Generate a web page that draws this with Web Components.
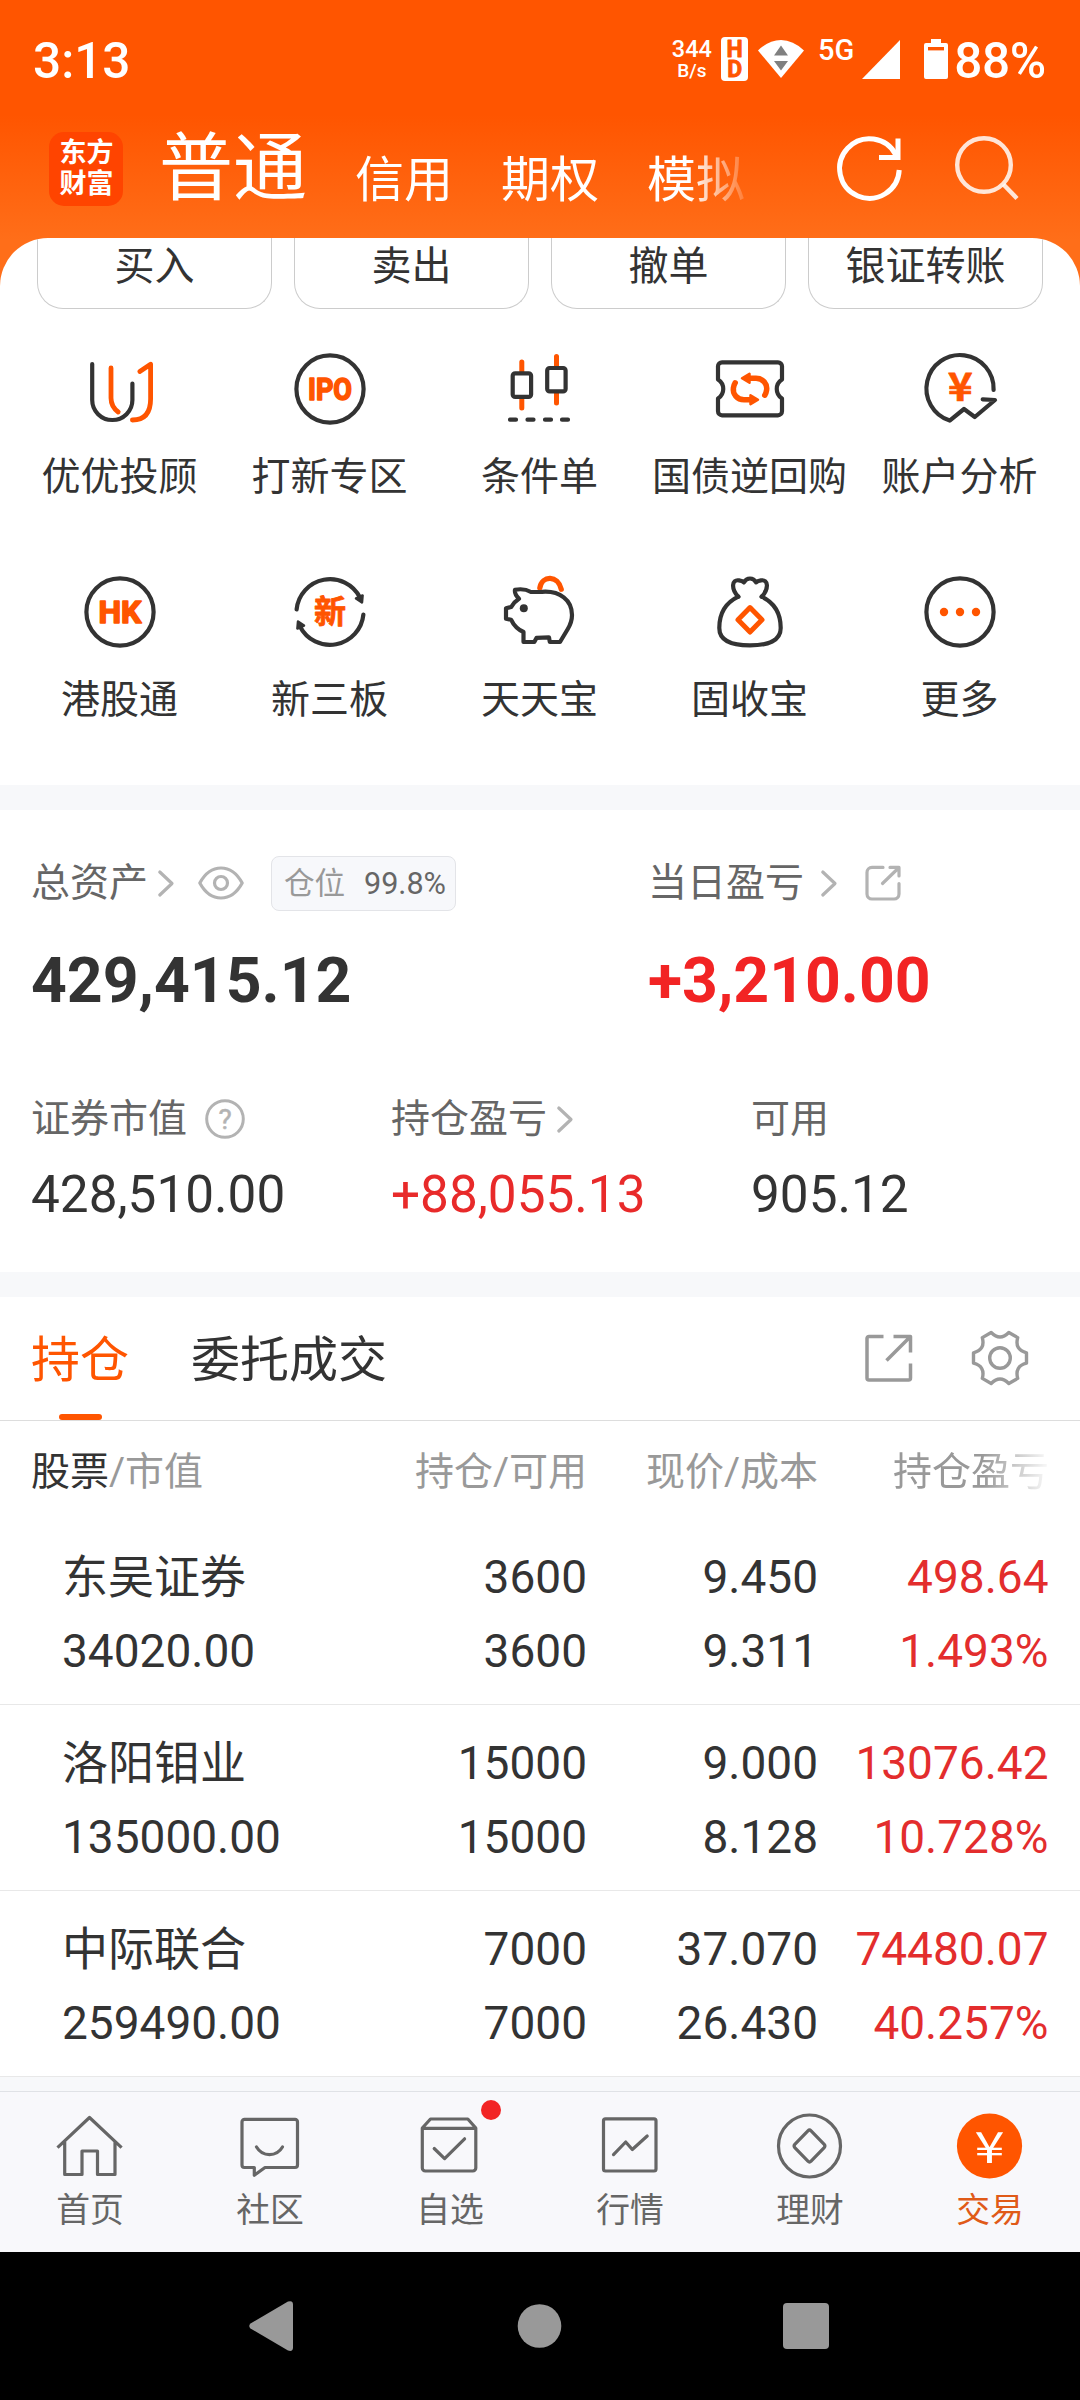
<!DOCTYPE html>
<html lang="zh-CN">
<head>
<meta charset="UTF-8">
<title>交易</title>
<style>
    body {
        margin: 0;
        width: 1080px;
        font-family: Roboto, "Noto Sans CJK SC", sans-serif;
        color: #333;
        background: #fff;
    }
</style>
</head>
<body>
<trade-page></trade-page>

<script>
const DARK = '#333';
const ORANGE = '#ff5500';

// outline of the settings gear: six flat teeth joined by concave curves
function gearPath(c, r, dip) {
    const at = (deg, rad) => {
        const a = deg * Math.PI / 180;
        return `${(c + rad * Math.cos(a)).toFixed(1)} ${(c + rad * Math.sin(a)).toFixed(1)}`;
    };
    let d = '';
    for (let i = 0; i < 6; i++) {
        const t = i * 60;
        d += `${i ? 'L' : 'M'}${at(t - 11, r)}L${at(t + 11, r)}Q${at(t + 30, dip)} ${at(t + 49, r)}`;
    }
    return d + 'Z';
}

const swapArrow = `
    <path d="M39 29.3H46C53 29.3 57.5 35 56.6 41Q56.2 44 54.8 46.2" stroke="${ORANGE}" stroke-width="5.5"/>
    <path d="M32 29.3L39.5 24.8V33.8Z" fill="${ORANGE}" stroke="${ORANGE}" stroke-width="2.5"/>`;

const ringArrow = `
    <path d="M6.6 37.5A33.6 33.6 0 0 1 70 25.5"/>
    <path d="M66 26.5L72.6 23.5L72 30.5Z" fill="${DARK}" stroke-width="2.5"/>`;

// name: [width, height, stroke colour, stroke width, markup]
const ICONS = {
    'hd': [27, 44, 'none', 0, `
        <rect width="27" height="44" rx="4" fill="#fff"/>
        <text x="13.5 13.8" y="20.3 40" font-size="23" style="stroke-width:.8">HD</text>`],
    'wifi': [48, 40, 'none', 0, `
        <path d="M1 11.5Q12 1 24 1T47 11.5L24 39Z" fill="#fff"/>
        <path d="M17 16.5L24 6.5L31 16.5ZM17 22L31 22L24 31.5Z" fill="#808080"/>`],
    'signal': [38, 39, 'none', 0, '<path d="M0 39L38 0V39Z" fill="#fff"/>'],
    'battery': [24, 40, 'none', 0, `
        <path d="M7 0H17V4H22Q24 4 24 6V38Q24 40 22 40H2Q0 40 0 38V6Q0 4 2 4H7Z" fill="#fff"/>
        <rect x="4" y="8" width="16" height="3.4" fill="${ORANGE}"/>`],
    'refresh': [70, 70, '#fff', 5, `
        <path d="M64.2 36A29.8 29.8 0 1 1 61 21" stroke-linecap="butt"/>
        <path d="M63 4.5V23.4H44" stroke-linecap="butt" stroke-linejoin="miter"/>`],
    'search': [70, 70, 'rgba(255,255,255,.84)', 4.4, `
        <circle cx="35" cy="31" r="26.8"/><path d="M54.5 50.5L68 64.5" stroke-linecap="butt"/>`],

    'uu': [80, 80, DARK, 4.2, `
        <path d="M12.2 15V51A20.1 20 0 0 0 52.4 51V34.5"/>
        <g stroke="${ORANGE}" stroke-width="4.8">
            <path d="M31 19V49Q31 57.5 38.2 63"/>
            <path d="M59.8 22.4L70.6 15.2V50Q70.6 71 52.4 71"/>
        </g>`],
    'ipo': [80, 80, DARK, 4.2, `
        <circle cx="40" cy="40" r="33.6"/>
        <text x="40" y="50.8" font-size="30.5" textLength="44" lengthAdjust="spacingAndGlyphs">IPO</text>`],
    'candle': [80, 80, DARK, 4.2, `
        <path d="M21.8 13V23M21.8 49V59M56.5 7.6V18M56.5 44V54" stroke="${ORANGE}" stroke-width="5"/>
        <rect x="12.7" y="24.3" width="18.4" height="23.6" rx="2.5"/>
        <rect x="47.2" y="19" width="18.4" height="23.4" rx="2.5"/>
        <path d="M10 70.7H16M27.5 70.7H33.5M45 70.7H51M62 70.7H68"/>`],
    'ticket': [80, 80, DARK, 4.2, `
        <path d="M12 13.3H68A4 4 0 0 1 72 17.3V30.5C65 35 65 45 72 49.5V62.3A4 4 0 0 1 68 66.3H12A4 4 0 0 1 8 62.3V49.5C15 45 15 35 8 30.5V17.3A4 4 0 0 1 12 13.3Z"/>
        ${swapArrow}<g transform="rotate(180 40 40)">${swapArrow}</g>`],
    'analysis': [80, 80, DARK, 4.2, `
        <path d="M73.6 41A33.6 33.6 0 1 0 29.7 71.6L44 60L54.8 68L75 51L62.7 50.4"/>
        <text class="yen" x="40.3" y="51.8" font-size="39" textLength="25" lengthAdjust="spacingAndGlyphs" style="stroke-width:.6">¥</text>`],
    'hk': [80, 80, DARK, 4.2, `
        <circle cx="40" cy="40" r="33.6"/>
        <text x="40" y="51.2" font-size="31.5" textLength="43" lengthAdjust="spacingAndGlyphs">HK</text>`],
    'new': [80, 80, DARK, 4.2, `
        ${ringArrow}<g transform="rotate(180 40 40)">${ringArrow}</g>
        <text x="40" y="51.4" font-size="32" style="stroke-width:.8">新</text>`],
    'piggy': [80, 80, DARK, 4.2, `
        <path d="M39.8 16C42 3 58 3 61.3 17.3" stroke="${ORANGE}" stroke-width="5.2"/>
        <path d="M19 26.8Q14.2 22 15 17.800Q24 16 31 20Q36 19.8 42 19.800C60 18.5 72 28 72 43Q72 50 67.8 57L60 70H49.800L49 65.3Q43 65.3 36.6 65.8L34.3 70H23.5V60Q15 56 11.2 47.8L6 46.8V36.200L11.2 35Q14 30 19 26.800Z"/>
        <circle cx="23.8" cy="36.3" r="4" fill="${DARK}" stroke="none"/>`],
    'bag': [80, 80, DARK, 4.2, `
        <path d="M28.3 24.7C13 32 9.3 44 9.3 56C9.3 69 22 73.4 40 73.4S70.7 69 70.7 56C70.7 44 67 32 51.7 24.7"/>
        <path d="M28.3 24.7C21 17 21.5 7 29 8.4Q32.5 9 34 10.4Q36 6.5 40 6.5T46 10.4Q47.5 9 51 8.4C58.5 7 59 17 51.7 24.7"/>
        <path d="M40 35.6L52 47.8L40 60L28 47.8Z" stroke="${ORANGE}" stroke-width="5"/>`],
    'more': [80, 80, DARK, 4.2, `
        <circle cx="40" cy="40" r="33.6"/>
        <g fill="${ORANGE}" stroke="none"><circle cx="24" cy="40" r="4.2"/><circle cx="40" cy="40" r="4.2"/><circle cx="56" cy="40" r="4.2"/></g>`],

    'chevron': [16, 27, '#b3b3b3', 3.2, '<path d="M1.8 2L14 13.5L1.8 25"/>'],
    'eye': [46, 34, '#b3b3b3', 3.2, `
        <path d="M1.8 17Q10 2 23 2T44.2 17Q36 32 23 32T1.8 17Z"/><circle cx="23" cy="17" r="6.5"/>`],
    'help': [40, 40, '#b3b3b3', 3, `
        <circle cx="20" cy="20" r="18.3"/>
        <text x="20" y="29.8" font-size="28" style="fill:#b3b3b3;stroke:#b3b3b3;stroke-width:.5;font-weight:400">?</text>`],
    'share-sm': [36, 36, '#b3b3b3', 3.2, `
        <path d="M18 2.4H7A5 5 0 0 0 2 7.4V29A5 5 0 0 0 7 34H29A5 5 0 0 0 34 29V18.5M25 2.4H34V11M33.5 3L17.5 18.5"/>`],
    'share': [48, 48, '#999', 3.5, `
        <path d="M18.5 2.5H4A2 2 0 0 0 2 4.5V44A2 2 0 0 0 4 46H43.5A2 2 0 0 0 45.5 44V29.5M28.5 2.5H45.5V18.5M45 3L21.5 26.5" stroke-linecap="butt"/>`],
    'gear': [58, 58, '#999', 3.4, `<path d="${gearPath(29, 27, 16.6)}"/><circle cx="29" cy="29" r="10.3"/>`],

    'home': [72, 72, '#666', 3.2, `
        <path d="M3.5 37.6L35.5 7.5L67.6 37.6M10.7 31V64.5H28V41H43.5V64.5H61V31" stroke-linecap="butt"/>`],
    'community': [72, 72, '#666', 3.2, `
        <path d="M11 9.4H61A2.5 2.5 0 0 1 63.5 12V55A2.5 2.5 0 0 1 61 57.5H31L20.3 65.3V57.5H10.4A2.5 2.5 0 0 1 8 55V12A2.5 2.5 0 0 1 11 9.4Z"/>
        <path d="M22.5 37Q27 44.6 35.5 44.6T48.5 37"/>`],
    'watch': [72, 72, '#666', 3.2, `
        <path d="M8.3 18V58A3 3 0 0 0 11.3 61H58.8A3 3 0 0 0 61.8 58V18M8.3 18L16.5 9H53.8L61.8 18M8.3 18.4H61.8"/>
        <path d="M20.2 38.5L30.6 48.6L50.6 28.8"/>`],
    'quotes': [72, 72, '#666', 3.2, `
        <rect x="9.5" y="8.8" width="52.5" height="52.2" rx="2"/><path d="M19.5 44.6L31.7 32L38.3 39.5L53.2 26"/>`],
    'wealth': [72, 72, '#666', 3.2, `
        <circle cx="35.5" cy="36" r="31"/>
        <path d="M33.9 20.8Q35.5 19.2 37.1 20.8L50.2 34.4Q51.6 36 50.2 37.6L37.1 51.2Q35.5 52.8 33.9 51.2L20.8 37.6Q19.4 36 20.8 34.4Z"/>`],
    'trade': [72, 72, 'none', 0, `
        <circle cx="35.5" cy="36" r="32.6" fill="${ORANGE}"/>
        <text class="yen" x="35.5" y="53" font-size="43" textLength="30" lengthAdjust="spacingAndGlyphs"
              style="fill:#fff;stroke:none;font-weight:400">¥</text>`],

    'nav-back': [46, 52, 'none', 0, '<path d="M1.5 23.5Q-1 26 1.5 28.5L39 50.5Q44 52 44 47.5V4.5Q44 0 39 1.5Z" fill="#999"/>'],
    'nav-home': [44, 44, 'none', 0, '<circle cx="22.5" cy="22" r="21.8" fill="#999"/>'],
    'nav-recent': [46, 46, 'none', 0, '<rect width="46" height="46" rx="4" fill="#999"/>']
};

class AppIcon extends HTMLElement {
    connectedCallback() {
        const [w, h, stroke, width, markup] = ICONS[this.getAttribute('name')];
        this.attachShadow({ mode: 'open' }).innerHTML = `
            <style>
                :host { display: block; flex: none; width: ${w}px; height: ${h}px; }
                svg { display: block; overflow: visible; }
                text {
                    font-family: Roboto, "Noto Sans CJK SC", sans-serif;
                    font-weight: 700;
                    text-anchor: middle;
                    fill: ${ORANGE};
                    stroke: ${ORANGE};
                    stroke-width: 1.6px;
                }
                .yen { font-family: "Noto Sans CJK SC", sans-serif; }
            </style>
            <svg width="${w}" height="${h}" viewBox="0 0 ${w} ${h}" fill="none" stroke="${stroke}"
                 stroke-width="${width}" stroke-linecap="round" stroke-linejoin="round">${markup}</svg>
        `;
    }
}

class StatusBar extends HTMLElement {
    connectedCallback() {
        this.attachShadow({ mode: 'open' }).innerHTML = `
            <style>
                :host {
                    display: flex;
                    align-items: center;
                    height: 121px;
                    padding: 0 34px 0 33px;
                    box-sizing: border-box;
                    color: #fff;
                    font-size: 49.5px;
                    font-weight: 500;
                }
                .icons { display: flex; align-items: center; margin: -3px 0 0 auto; }
                .speed { font-size: 23.5px; line-height: 24px; text-align: center; margin-right: 9px; }
                .speed small { display: block; font-size: 19px; line-height: 20px; }
                .net { font-size: 29px; line-height: 28px; margin: 0 8px 18px 13px; }
                app-icon[name=wifi] { margin-left: 9px; }
                app-icon[name=battery] { margin: 0 6px 0 24px; }
                .level { line-height: 60px; padding-top: 3px; letter-spacing: -.3px; }
            </style>
            <span>3:13</span>
            <div class="icons">
                <div class="speed">344<small>B/s</small></div>
                <app-icon name="hd"></app-icon>
                <app-icon name="wifi"></app-icon>
                <span class="net">5G</span>
                <app-icon name="signal"></app-icon>
                <app-icon name="battery"></app-icon>
                <span class="level">88%</span>
            </div>
        `;
    }
}

class AppHeader extends HTMLElement {
    connectedCallback() {
        this.attachShadow({ mode: 'open' }).innerHTML = `
            <style>
                :host {
                    display: flex;
                    align-items: center;
                    height: 96px;
                    padding: 0 61px 21px 49px;
                    color: #fff;
                }
                .logo {
                    width: 74px;
                    height: 74px;
                    padding: 6px 0 6px 1px;
                    box-sizing: border-box;
                    border-radius: 15px;
                    background: #ff4400;
                    font-size: 27px;
                    font-weight: 700;
                    line-height: 31px;
                    text-align: center;
                }
                .accounts {
                    display: flex;
                    width: 597px;
                    margin-left: 36px;
                    gap: 48px;
                    overflow: hidden;
                    white-space: nowrap;
                    font-size: 49px;
                    -webkit-mask-image: linear-gradient(90deg, #000 530px, transparent 597px);
                    mask-image: linear-gradient(90deg, #000 530px, transparent 597px);
                }
                .accounts span { padding-top: 23px; line-height: 73px; }
                .accounts .on { padding: 0; font-size: 74px; line-height: 96px; }
                .actions { display: flex; gap: 44px; margin-left: auto; }
            </style>
            <div class="logo">东方<br>财富</div>
            <div class="accounts">
                <span class="on">普通</span><span>信用</span><span>期权</span><span>模拟</span>
            </div>
            <div class="actions">
                <app-icon name="refresh"></app-icon>
                <app-icon name="search"></app-icon>
            </div>
        `;
    }
}

class QuickButton extends HTMLElement {
    connectedCallback() {
        this.attachShadow({ mode: 'open' }).innerHTML = `
            <style>
                :host {
                    display: block;
                    flex: 1;
                    height: 71px;
                    box-sizing: border-box;
                    border: 1px solid #ccc;
                    border-top: 0;
                    border-radius: 0 0 26px 26px;
                    font-size: 40px;
                    line-height: 58px;
                    text-align: center;
                }
            </style>
            <slot></slot>
        `;
    }
}

class QuickEntry extends HTMLElement {
    connectedCallback() {
        this.attachShadow({ mode: 'open' }).innerHTML = `
            <style>
                :host {
                    display: flex;
                    flex-direction: column;
                    align-items: center;
                    gap: 20px;
                    font-size: 39px;
                    line-height: 56px;
                    white-space: nowrap;
                }
            </style>
            <app-icon name="${this.getAttribute('icon')}"></app-icon>
            <span><slot></slot></span>
        `;
    }
}

class AssetStat extends HTMLElement {
    connectedCallback() {
        this.attachShadow({ mode: 'open' }).innerHTML = `
            <style>
                :host { display: block; }
                .label {
                    display: flex;
                    align-items: center;
                    height: 56px;
                    font-size: 39px;
                    line-height: 56px;
                    color: #666;
                    white-space: nowrap;
                }
                .value { font-size: 51.3px; line-height: 60px; margin-top: 18px; color: #333; }
                :host([up]) .value { color: #e82a2a; }
                :host([main]) .value {
                    font-size: 62.5px;
                    line-height: 72px;
                    margin-top: 34px;
                    font-weight: 700;
                }
                :host([main][up]) .value { color: #f22424; }
            </style>
            <div class="label">${this.getAttribute('label')}<slot></slot></div>
            <div class="value">${this.getAttribute('value')}</div>
        `;
    }
}

class PositionTag extends HTMLElement {
    connectedCallback() {
        this.attachShadow({ mode: 'open' }).innerHTML = `
            <style>
                :host {
                    display: flex;
                    justify-content: space-between;
                    align-self: flex-end;
                    width: 185px;
                    height: 55px;
                    padding: 0 9px 0 12px;
                    box-sizing: border-box;
                    border: 1px solid #e3e4e8;
                    border-radius: 8px;
                    background: #f7f8fb;
                    font-size: 30.6px;
                    line-height: 54px;
                    color: #666;
                }
                .name { color: #999; }
            </style>
            <span class="name">仓位</span><slot></slot>
        `;
    }
}

class HoldingTabs extends HTMLElement {
    connectedCallback() {
        this.attachShadow({ mode: 'open' }).innerHTML = `
            <style>
                :host {
                    display: flex;
                    align-items: center;
                    height: 123px;
                    padding: 0 51px 0 31px;
                    border-bottom: 1px solid #ddd;
                    font-size: 49px;
                    line-height: 119px;
                }
                span { position: relative; padding-top: 4px; margin-right: 62px; }
                .on { color: ${ORANGE}; }
                .on::after {
                    content: '';
                    position: absolute;
                    left: 28px;
                    bottom: 0;
                    width: 43px;
                    height: 6px;
                    border-radius: 3px;
                    background: ${ORANGE};
                }
                .actions { display: flex; align-items: center; gap: 58px; margin: -2px 0 0 auto; }
            </style>
            <span class="on">持仓</span><span>委托成交</span>
            <div class="actions">
                <app-icon name="share"></app-icon>
                <app-icon name="gear"></app-icon>
            </div>
        `;
    }
}

class HoldingHead extends HTMLElement {
    connectedCallback() {
        this.attachShadow({ mode: 'open' }).innerHTML = `
            <style>
                :host {
                    display: grid;
                    grid-template-columns: 325px 231px 231px 231px;
                    height: 94px;
                    padding: 4px 31px 0;
                    font-size: 39px;
                    line-height: 94px;
                    color: #999;
                    text-align: right;
                }
                .first { text-align: left; }
                b { font-weight: 400; color: #333; }
                .fade {
                    -webkit-mask-image: linear-gradient(90deg, #000 165px, transparent 234px);
                    mask-image: linear-gradient(90deg, #000 165px, transparent 234px);
                }
            </style>
            <span class="first"><b>股票</b>/市值</span>
            <span>持仓/可用</span>
            <span>现价/成本</span>
            <span class="fade">持仓盈亏</span>
        `;
    }
}

class HoldingRow extends HTMLElement {
    connectedCallback() {
        const get = name => this.getAttribute(name);
        this.attachShadow({ mode: 'open' }).innerHTML = `
            <style>
                :host {
                    display: grid;
                    grid-template-columns: 325px 231px 231px 230.5px;
                    grid-auto-rows: 74px;
                    height: 186px;
                    padding: 20.5px 31px 0;
                    box-sizing: border-box;
                    border-bottom: 1px solid #e8e8e8;
                    font-size: 46px;
                    line-height: 74px;
                    text-align: right;
                }
                .name { text-align: left; padding-left: 31px; }
                .up { color: #e32d2d; }
            </style>
            <span class="name">${get('name')}</span>
            <span>${get('amount')}</span>
            <span>${get('price')}</span>
            <span class="up">${get('profit')}</span>
            <span class="name">${get('value')}</span>
            <span>${get('usable')}</span>
            <span>${get('cost')}</span>
            <span class="up">${get('rate')}</span>
        `;
    }
}

class TabItem extends HTMLElement {
    connectedCallback() {
        this.attachShadow({ mode: 'open' }).innerHTML = `
            <style>
                :host {
                    position: relative;
                    display: flex;
                    flex-direction: column;
                    align-items: center;
                    gap: 9px;
                    padding-top: 18px;
                    font-size: 33.8px;
                    line-height: 40px;
                    color: #666;
                }
                :host([active]) { color: #e05a18; }
                :host([badge])::after {
                    content: '';
                    position: absolute;
                    left: 121px;
                    top: 8px;
                    width: 20px;
                    height: 20px;
                    border-radius: 50%;
                    background: #f22424;
                }
            </style>
            <app-icon name="${this.getAttribute('icon')}"></app-icon>
            <span><slot></slot></span>
        `;
    }
}

class SystemNav extends HTMLElement {
    connectedCallback() {
        this.attachShadow({ mode: 'open' }).innerHTML = `
            <style>
                :host {
                    display: flex;
                    justify-content: space-between;
                    align-items: center;
                    height: 148px;
                    padding: 0 251px 0 249px;
                    background: #000;
                }
            </style>
            <app-icon name="nav-back"></app-icon>
            <app-icon name="nav-home"></app-icon>
            <app-icon name="nav-recent"></app-icon>
        `;
    }
}

class TradePage extends HTMLElement {
    connectedCallback() {
        this.attachShadow({ mode: 'open' }).innerHTML = `
            <style>
                :host {
                    display: block;
                    height: 2400px;
                    overflow: hidden;
                    background: linear-gradient(#ff5500 115px, #ff6e19 240px);
                }
                main { background: #fff; border-radius: 48px 48px 0 0; overflow: hidden; }
                .buttons { display: flex; gap: 22px; padding: 0 37px; }
                .entries {
                    display: grid;
                    grid-template-columns: repeat(5, 210px);
                    row-gap: 67px;
                    padding: 40px 0 57px 14.5px;
                }
                .band { height: 25px; background: #f7f8fa; }
                .band.last { height: 14px; }
                .assets { padding: 45px 0 47px 31px; }
                .totals { display: grid; grid-template-columns: 617px 1fr; }
                .details { display: grid; grid-template-columns: repeat(3, 360px); margin-top: 74px; }
                nav {
                    display: grid;
                    grid-template-columns: repeat(6, 180px);
                    height: 160px;
                    border-top: 1px solid #e0e2e6;
                    background: #f8f8fb;
                }
            </style>
            <status-bar></status-bar>
            <app-header></app-header>
            <main>
                <div class="buttons">
                    <quick-button>买入</quick-button>
                    <quick-button>卖出</quick-button>
                    <quick-button>撤单</quick-button>
                    <quick-button>银证转账</quick-button>
                </div>
                <div class="entries">
                    <quick-entry icon="uu">优优投顾</quick-entry>
                    <quick-entry icon="ipo">打新专区</quick-entry>
                    <quick-entry icon="candle">条件单</quick-entry>
                    <quick-entry icon="ticket">国债逆回购</quick-entry>
                    <quick-entry icon="analysis">账户分析</quick-entry>
                    <quick-entry icon="hk">港股通</quick-entry>
                    <quick-entry icon="new">新三板</quick-entry>
                    <quick-entry icon="piggy">天天宝</quick-entry>
                    <quick-entry icon="bag">固收宝</quick-entry>
                    <quick-entry icon="more">更多</quick-entry>
                </div>
                <div class="band"></div>
                <section class="assets">
                    <div class="totals">
                        <asset-stat main label="总资产" value="429,415.12">
                            <app-icon name="chevron" style="margin-left:10px"></app-icon>
                            <app-icon name="eye" style="margin:0 27px 0 24px"></app-icon>
                            <position-tag>99.8%</position-tag>
                        </asset-stat>
                        <asset-stat main up label="当日盈亏" value="+3,210.00">
                            <app-icon name="chevron" style="margin-left:17px"></app-icon>
                            <app-icon name="share-sm" style="margin-left:28px"></app-icon>
                        </asset-stat>
                    </div>
                    <div class="details">
                        <asset-stat label="证券市值" value="428,510.00">
                            <app-icon name="help" style="margin-left:18px"></app-icon>
                        </asset-stat>
                        <asset-stat up label="持仓盈亏" value="+88,055.13">
                            <app-icon name="chevron" style="margin-left:10px"></app-icon>
                        </asset-stat>
                        <asset-stat label="可用" value="905.12"></asset-stat>
                    </div>
                </section>
                <div class="band"></div>
                <holding-tabs></holding-tabs>
                <holding-head></holding-head>
                <holding-row name="东吴证券" value="34020.00" amount="3600" usable="3600"
                    price="9.450" cost="9.311" profit="498.64" rate="1.493%"></holding-row>
                <holding-row name="洛阳钼业" value="135000.00" amount="15000" usable="15000"
                    price="9.000" cost="8.128" profit="13076.42" rate="10.728%"></holding-row>
                <holding-row name="中际联合" value="259490.00" amount="7000" usable="7000"
                    price="37.070" cost="26.430" profit="74480.07" rate="40.257%"></holding-row>
                <div class="band last"></div>
                <nav>
                    <tab-item icon="home">首页</tab-item>
                    <tab-item icon="community">社区</tab-item>
                    <tab-item icon="watch" badge>自选</tab-item>
                    <tab-item icon="quotes">行情</tab-item>
                    <tab-item icon="wealth">理财</tab-item>
                    <tab-item icon="trade" active>交易</tab-item>
                </nav>
            </main>
            <system-nav></system-nav>
        `;
    }
}

customElements.define('app-icon', AppIcon);
customElements.define('status-bar', StatusBar);
customElements.define('app-header', AppHeader);
customElements.define('quick-button', QuickButton);
customElements.define('quick-entry', QuickEntry);
customElements.define('asset-stat', AssetStat);
customElements.define('position-tag', PositionTag);
customElements.define('holding-tabs', HoldingTabs);
customElements.define('holding-head', HoldingHead);
customElements.define('holding-row', HoldingRow);
customElements.define('tab-item', TabItem);
customElements.define('system-nav', SystemNav);
customElements.define('trade-page', TradePage);
</script>
</body>
</html>
